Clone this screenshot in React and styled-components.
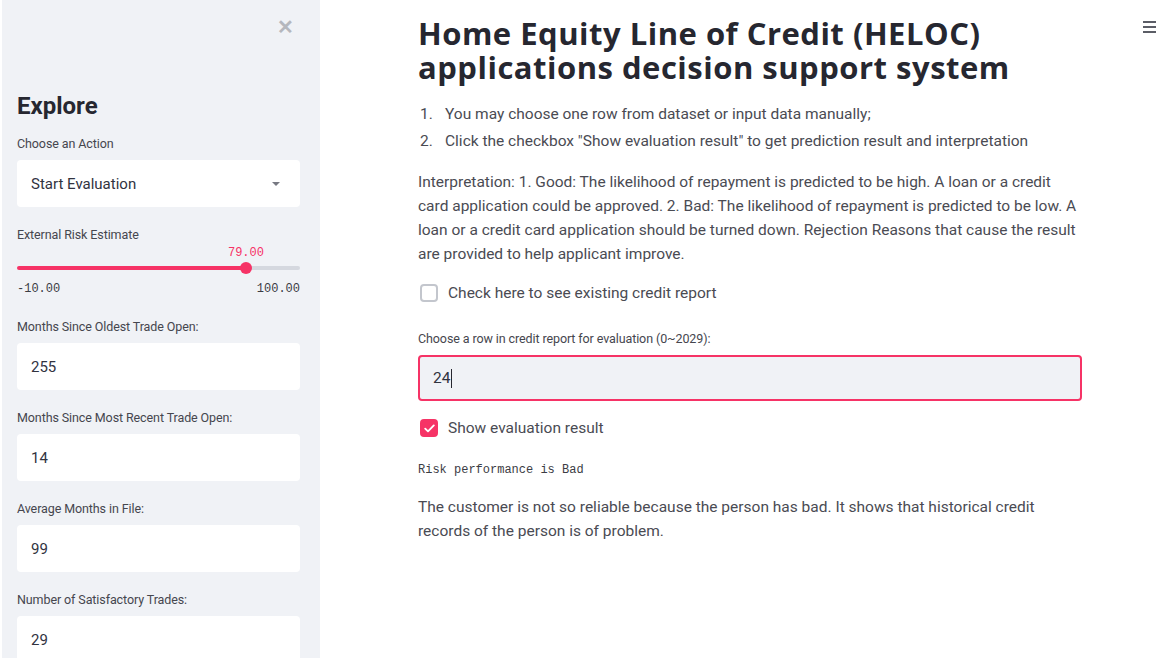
import React from 'react';
import styled, { createGlobalStyle } from 'styled-components';

const GlobalStyle = createGlobalStyle`
  html, body {
    margin: 0;
    padding: 0;
    background: #fff;
  }
  body {
    font-family: Roboto, "Liberation Sans", sans-serif;
    color: #262730;
  }
  *, *::before, *::after {
    box-sizing: border-box;
  }
`;

const PINK = '#f63366';
const MONO = '"Liberation Mono", "DejaVu Sans Mono", monospace';

const Page = styled.div`
  display: flex;
  width: 1172px;
  height: 658px;
  overflow: hidden;
`;

const Sidebar = styled.aside`
  width: 318px;
  flex-shrink: 0;
  margin-left: 2px;
  background: #f0f2f6;
  padding: 0 20px 0 15px;
  display: flex;
  flex-direction: column;
  overflow: hidden;

  & > * {
    flex-shrink: 0;
  }
`;

const CloseRow = styled.div`
  height: 54px;
  display: flex;
  align-items: center;
  justify-content: flex-end;
  padding-right: 6px;
  margin-bottom: 37px;
`;

const CloseButton = styled.span`
  color: #b5b7bd;
  font-size: 20px;
  font-weight: 700;
  line-height: 1;
`;

const SideTitle = styled.h2`
  margin: 0 0 15px;
  font-size: 24px;
  line-height: 30px;
  font-weight: 700;
  color: #262730;
`;

const Field = styled.div`
  display: flex;
  flex-direction: column;
  gap: 8px;
  margin-bottom: 20px;
`;

const FieldLabel = styled.label`
  font-size: 12.5px;
  line-height: 16px;
  color: #45464e;
  letter-spacing: -0.1px;
`;

const Box = styled.div`
  height: 47px;
  background: #fff;
  border-radius: 4px;
  display: flex;
  align-items: center;
  justify-content: space-between;
  padding: 0 20px 0 14px;
  font-size: 15px;
  color: #31333f;
`;

const Caret = styled.span`
  width: 0;
  height: 0;
  border-left: 4px solid transparent;
  border-right: 4px solid transparent;
  border-top: 4px solid #777982;
`;

const SliderBlock = styled.div`
  display: flex;
  flex-direction: column;
  margin-bottom: 20px;
`;

const SliderValueRow = styled.div`
  height: 18px;
`;

const Track = styled.div`
  position: relative;
  height: 14px;
  display: flex;
  align-items: center;
`;

const TrackLine = styled.div`
  flex: 1;
  height: 4px;
  border-radius: 2px;
  background: linear-gradient(
    to right,
    ${PINK} 0,
    ${PINK} ${p => p.$pct}%,
    #d5d8df ${p => p.$pct}%,
    #d5d8df 100%
  );
`;

const Thumb = styled.span`
  position: absolute;
  top: 1px;
  width: 12px;
  height: 12px;
  margin-left: -6px;
  border-radius: 50%;
  background: ${PINK};
`;

const ThumbValue = styled.span`
  position: absolute;
  bottom: 100%;
  left: 6px;
  margin-bottom: 2px;
  transform: translateX(-50%);
  font-family: ${MONO};
  font-size: 12px;
  line-height: 14px;
  color: ${PINK};
  white-space: nowrap;
`;

const SliderBounds = styled.div`
  display: flex;
  justify-content: space-between;
  padding-top: 6px;
  height: 24px;
  font-family: ${MONO};
  font-size: 12px;
  line-height: 16px;
  color: #3b3c44;
`;

const Main = styled.main`
  position: relative;
  flex: 1;
  padding: 16px 0 0 98px;
`;

const Content = styled.div`
  width: 664px;
  display: flex;
  flex-direction: column;
`;

const Title = styled.h1`
  margin: 0 0 17px;
  font-family: "Open Sans", Roboto, sans-serif;
  font-size: 31px;
  line-height: 34px;
  font-weight: 700;
  letter-spacing: 0.5px;
  color: #262730;
`;

const Steps = styled.ol`
  margin: 0 0 15px;
  padding: 0;
  list-style: none;
`;

const Step = styled.li`
  display: flex;
  font-size: 15.5px;
  line-height: 27px;
  color: #4a4b53;
`;

const StepNum = styled.span`
  width: 27px;
  padding-left: 2px;
  flex-shrink: 0;
`;

const Paragraph = styled.p`
  margin: 0 0 ${p => p.$gap || 0}px;
  font-size: 15.5px;
  line-height: 24px;
  color: #4a4b53;
`;

const CheckRow = styled.label`
  display: flex;
  align-items: center;
  gap: 10px;
  height: 24px;
  padding-left: 2px;
  margin-bottom: ${p => p.$gap}px;
  font-size: 15.5px;
  color: #4a4b53;
`;

const CheckBox = styled.span`
  width: 18px;
  height: 18px;
  border-radius: 4px;
  border: 2px solid ${p => (p.$checked ? PINK : '#c3c6cd')};
  background: ${p => (p.$checked ? PINK : '#fff')};
  display: flex;
  align-items: center;
  justify-content: center;
`;

const MainField = styled.div`
  display: flex;
  flex-direction: column;
  gap: 8px;
  margin-bottom: 15px;
`;

const FocusInput = styled.div`
  height: 46px;
  border: 2px solid ${PINK};
  border-radius: 4px;
  background: #f0f2f6;
  display: flex;
  align-items: center;
  padding-left: 13px;
  font-size: 15.5px;
  color: #31333f;
`;

const Cursor = styled.span`
  display: inline-block;
  width: 1px;
  height: 19px;
  margin-left: 1px;
  background: #262730;
`;

const Code = styled.div`
  margin: 21px 0 16px;
  font-family: ${MONO};
  font-size: 12px;
  line-height: 18px;
  color: #3b3c44;
`;

const MenuButton = styled.span`
  position: absolute;
  top: 21px;
  right: 16px;
  display: flex;
  flex-direction: column;
  gap: 3px;
  span {
    width: 13px;
    height: 2px;
    background: #5b5d66;
  }
`;

const sideFields = [
  ['Months Since Oldest Trade Open:', '255'],
  ['Months Since Most Recent Trade Open:', '14'],
  ['Average Months in File:', '99'],
  ['Number of Satisfactory Trades:', '29'],
];

function Slider({ min, max, value }) {
  const pct = ((value - min) / (max - min)) * 100;
  return (
    <SliderBlock>
      <SliderValueRow />
      <Track>
        <TrackLine $pct={pct} />
        <Thumb style={{ left: `${pct}%` }}>
          <ThumbValue>{value.toFixed(2)}</ThumbValue>
        </Thumb>
      </Track>
      <SliderBounds>
        <span>{min.toFixed(2)}</span>
        <span>{max.toFixed(2)}</span>
      </SliderBounds>
    </SliderBlock>
  );
}

export default function App() {
  return (
    <Page>
      <GlobalStyle />
      <Sidebar>
        <CloseRow>
          <CloseButton>✕</CloseButton>
        </CloseRow>
        <SideTitle>Explore</SideTitle>
        <Field>
          <FieldLabel>Choose an Action</FieldLabel>
          <Box>
            Start Evaluation
            <Caret />
          </Box>
        </Field>
        <FieldLabel>External Risk Estimate</FieldLabel>
        <Slider min={-10} max={100} value={79} />
        {sideFields.map(([label, val]) => (
          <Field key={label}>
            <FieldLabel>{label}</FieldLabel>
            <Box>{val}</Box>
          </Field>
        ))}
      </Sidebar>

      <Main>
        <Content>
          <Title>Home Equity Line of Credit (HELOC) applications decision support system</Title>
          <Steps>
            <Step>
              <StepNum>1.</StepNum>
              You may choose one row from dataset or input data manually;
            </Step>
            <Step>
              <StepNum>2.</StepNum>
              Click the checkbox "Show evaluation result" to get prediction result and interpretation
            </Step>
          </Steps>
          <Paragraph $gap={15}>
            Interpretation: 1. Good: The likelihood of repayment is predicted to be high. A loan or a credit
            card application could be approved. 2. Bad: The likelihood of repayment is predicted to be low. A
            loan or a credit card application should be turned down. Rejection Reasons that cause the result
            are provided to help applicant improve.
          </Paragraph>
          <CheckRow $gap={26}>
            <CheckBox />
            Check here to see existing credit report
          </CheckRow>
          <MainField>
            <FieldLabel>Choose a row in credit report for evaluation (0~2029):</FieldLabel>
            <FocusInput>
              24
              <Cursor />
            </FocusInput>
          </MainField>
          <CheckRow $gap={0}>
            <CheckBox $checked>
              <svg width="11" height="9" viewBox="0 0 11 9" fill="none">
                <path d="M1.2 4.6 L4 7.4 L9.8 1.4" stroke="#fff" strokeWidth="1.8" strokeLinecap="round" strokeLinejoin="round" />
              </svg>
            </CheckBox>
            Show evaluation result
          </CheckRow>
          <Code>Risk performance is Bad</Code>
          <Paragraph>
            The customer is not so reliable because the person has bad. It shows that historical credit
            records of the person is of problem.
          </Paragraph>
        </Content>
        <MenuButton>
          <span />
          <span />
          <span />
        </MenuButton>
      </Main>
    </Page>
  );
}
